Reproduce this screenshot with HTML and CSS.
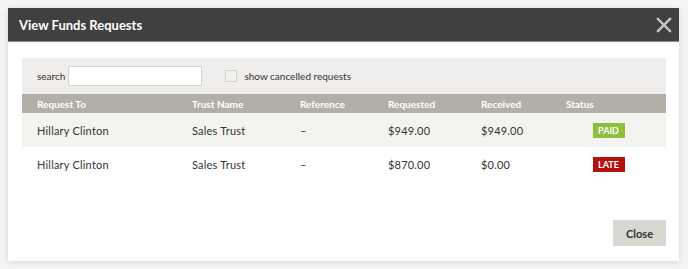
FILE: index.html
```html
<!DOCTYPE html>
<html lang="en">
  <head>
    <meta charset="UTF-8" />
    <title>View Funds Requests</title>
    <link rel="stylesheet" href="styles.css">
  </head>
  <body>
    <div class="modal">
      <div class="modal-header">
        <h1>View Funds Requests</h1>
        <button class="close-x" aria-label="Close">
          <svg width="16" height="16" viewBox="0 0 16 16">
            <path d="M2 2 L14 14 M14 2 L2 14" stroke="#cbcbc6" stroke-width="2.4" stroke-linecap="square" />
          </svg>
        </button>
      </div>
      <div class="modal-body">
        <div class="filters">
          <label class="search-label">search</label>
          <input type="text" class="search-input" />
          <label class="check">
            <span class="box"></span>
            show cancelled requests
          </label>
        </div>
        <table class="requests">
          <thead>
            <tr>
              <th class="c1">Request To</th>
              <th class="c2">Trust Name</th>
              <th class="c3">Reference</th>
              <th class="c4">Requested</th>
              <th class="c5">Received</th>
              <th class="c6">Status</th>
            </tr>
          </thead>
          <tbody>
            <tr class="odd">
              <td>Hillary Clinton</td>
              <td>Sales Trust</td>
              <td>–</td>
              <td>$949.00</td>
              <td>$949.00</td>
              <td class="status"><span class="badge paid">PAID</span></td>
            </tr>
            <tr>
              <td>Hillary Clinton</td>
              <td>Sales Trust</td>
              <td>–</td>
              <td>$870.00</td>
              <td>$0.00</td>
              <td class="status"><span class="badge late">LATE</span></td>
            </tr>
          </tbody>
        </table>
        <div class="footer">
          <button class="btn-close">Close</button>
        </div>
      </div>
    </div>
  </body>
</html>
```

FILE: styles.css
```css
* {
  box-sizing: border-box;
}
body {
  margin: 0;
  padding: 8px 9px 8px 8px;
  background: #f4f4f4;
  font-family: "Lato", "Liberation Sans", sans-serif;
  color: #333;
}
.modal {
  width: 671px;
  height: 253px;
  background: #fff;
  box-shadow: 0 1px 6px rgba(0, 0, 0, 0.12);
  display: flex;
  flex-direction: column;
}
.modal-header {
  height: 34px;
  background: #404040;
  border-bottom: 1px solid #8a8a8a;
  display: flex;
  align-items: center;
  justify-content: space-between;
  padding: 0 7px 0 11px;
}
.modal-header h1 {
  margin: 0;
  color: #fff;
  font-size: 13px;
  font-weight: 700;
}
.close-x {
  border: none;
  background: none;
  padding: 0;
  width: 16px;
  height: 16px;
  cursor: pointer;
}
.close-x svg {
  display: block;
}
.modal-body {
  flex: 1;
  padding: 16px 13px 15px 14px;
  display: flex;
  flex-direction: column;
}
.filters {
  height: 36px;
  background: #efeeec;
  display: flex;
  align-items: center;
  padding-left: 15px;
  font-size: 10px;
  color: #333;
}
.search-label {
  margin-right: 3px;
}
.search-input {
  width: 134px;
  height: 20px;
  border: 1px solid #d6d4cf;
  background: #fff;
  margin: 0 23px 0 0;
  padding: 0 4px;
}
.check {
  display: flex;
  align-items: center;
}
.box {
  width: 12px;
  height: 12px;
  border: 1px solid #d3d1cc;
  background: #f2f1ef;
  margin-right: 7px;
}
.requests {
  width: 644px;
  border-collapse: collapse;
  table-layout: fixed;
}
.requests th {
  height: 19px;
  background: #b2afa6;
  color: #fff;
  font-size: 10px;
  font-weight: 700;
  text-align: left;
  padding: 0 0 0 15px;
}
.requests td {
  height: 34px;
  font-size: 11px;
  letter-spacing: 0.2px;
  padding: 0 0 0 15px;
  color: #333;
}
.requests tr.odd td {
  background: #f3f3ef;
}
.c1 { width: 155px; }
.c2 { width: 108px; }
.c3 { width: 88px; }
.c4 { width: 93px; }
.c5 { width: 85px; }
.c6 { width: 115px; }
.requests td.status {
  text-align: center;
  padding: 0;
}
.badge {
  display: inline-block;
  width: 32px;
  height: 15px;
  line-height: 15px;
  color: #fff;
  font-size: 9px;
  font-weight: 700;
  letter-spacing: 0;
  text-align: center;
  vertical-align: middle;
}
.paid {
  background: #8dc03f;
}
.late {
  background: #b3120e;
}
.footer {
  margin-top: auto;
  display: flex;
  justify-content: flex-end;
}
.btn-close {
  width: 53px;
  height: 26px;
  border: none;
  background: #d8d7d1;
  color: #333;
  font-family: inherit;
  font-size: 11px;
  font-weight: 700;
  cursor: pointer;
}
```
